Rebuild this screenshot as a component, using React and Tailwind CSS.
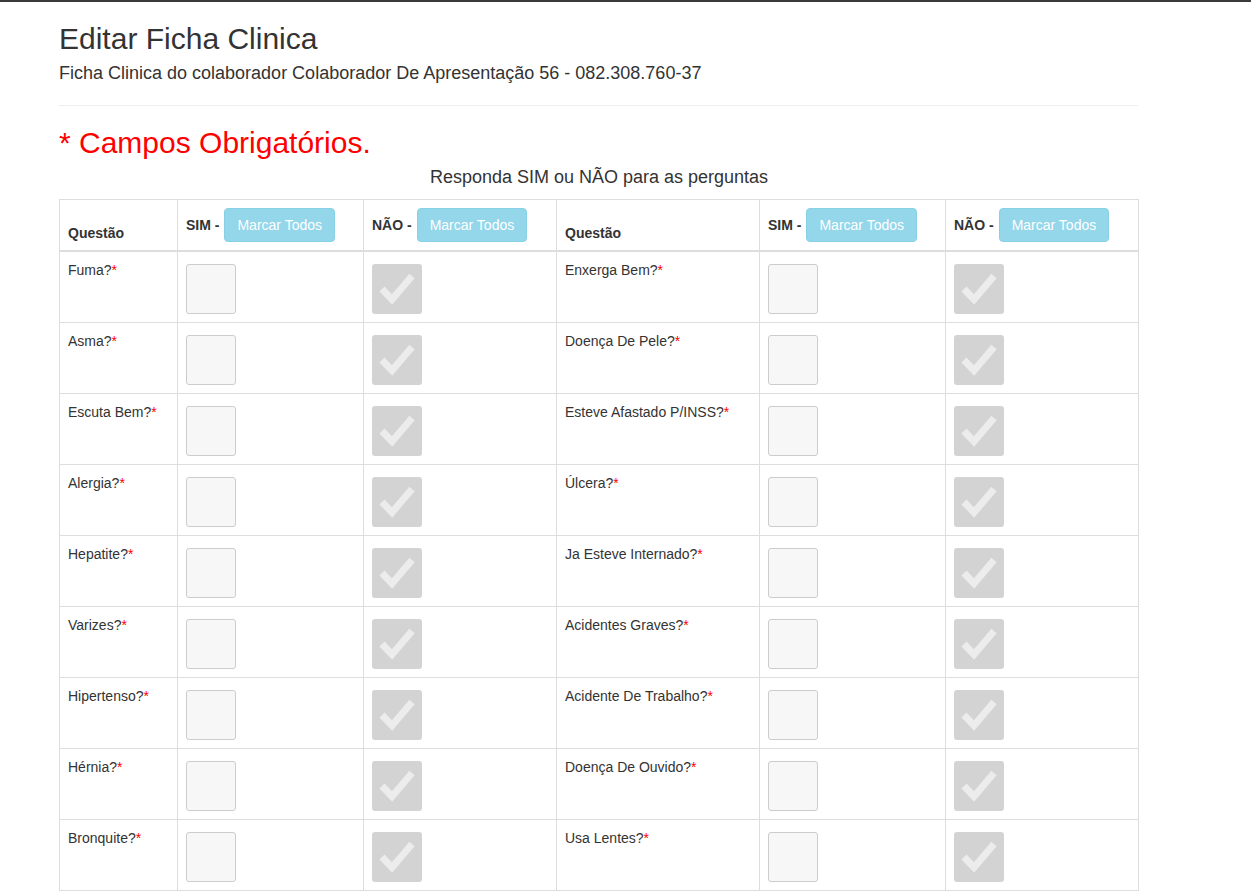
import React from "react";

const left = ["Fuma?", "Asma?", "Escuta Bem?", "Alergia?", "Hepatite?", "Varizes?", "Hipertenso?", "Hérnia?", "Bronquite?"];
const right = ["Enxerga Bem?", "Doença De Pele?", "Esteve Afastado P/INSS?", "Úlcera?", "Ja Esteve Internado?", "Acidentes Graves?", "Acidente De Trabalho?", "Doença De Ouvido?", "Usa Lentes?"];

const cols = "grid grid-cols-[117px_186px_193px_203px_186px_193px]";

const MarkAll = () => (
    <button className="ml-[5px] h-[34px] px-[12px] rounded-[4px] bg-[#94d6ea] border border-[#87d1e7] text-white text-[14px] leading-[20px] font-normal cursor-not-allowed">
        Marcar Todos
    </button>
);

const Empty = () => (
    <div className="mt-[4px] w-[50px] h-[50px] rounded-[3px] border border-[#cccccc] bg-[#f7f7f7]" />
);

const Checked = () => (
    <div className="mt-[4px] w-[50px] h-[50px] rounded-[3px] bg-[#d3d3d3]">
        <svg width="50" height="50" viewBox="0 0 50 50">
            <polyline points="10,25 20,35.5 40,12" fill="none" stroke="#ececec" strokeWidth="7" strokeLinejoin="miter" />
        </svg>
    </div>
);

const Question = ({ text }) => (
    <span>
        {text}
        <span className="text-[#ff0000]">*</span>
    </span>
);

export default function App() {
    return (
        <div className="min-h-screen bg-white text-[#333333] font-['Liberation_Sans',Arial,sans-serif]">
            <div className="h-[2px] bg-[#3a3a3a]" />

            <div className="ml-[59px] w-[1080px] pt-[20px]">
                {/* Cabeçalho */}
                <h1 className="text-[30px] leading-[33px]">Editar Ficha Clinica</h1>
                <p className="mt-[6px] text-[18px] leading-[25.7px]">
                    Ficha Clinica do colaborador Colaborador De Apresentação 56 - 082.308.760-37
                </p>
                <hr className="mt-[18px] w-[1079px] border-0 border-t border-[#eeeeee]" />

                <h2 className="mt-[20px] text-[30px] leading-[33px] text-[#ff0000]">* Campos Obrigatórios.</h2>
                <p className="mt-[6px] text-center text-[18px] leading-[25.7px]">Responda SIM ou NÃO para as perguntas</p>

                {/* Tabela */}
                <div className="mt-[9px] border border-[#dddddd] text-[14px] leading-[20px]">
                    <div className={`${cols} border-b-2 border-[#dddddd] font-bold h-[52px]`}>
                        <div className="flex items-end p-2 pb-[7px]">Questão</div>
                        <div className="flex items-center p-2 border-l border-[#dddddd]">SIM - <MarkAll /></div>
                        <div className="flex items-center p-2 border-l border-[#dddddd]">NÃO - <MarkAll /></div>
                        <div className="flex items-end p-2 pb-[7px] border-l border-[#dddddd]">Questão</div>
                        <div className="flex items-center p-2 border-l border-[#dddddd]">SIM - <MarkAll /></div>
                        <div className="flex items-center p-2 border-l border-[#dddddd]">NÃO - <MarkAll /></div>
                    </div>

                    {left.map((q, i) => (
                        <div key={q} className={`${cols} h-[71px] border-b border-[#dddddd] last:border-b-0 last:h-[70px]`}>
                            <div className="p-2"><Question text={q} /></div>
                            <div className="p-2 border-l border-[#dddddd]"><Empty /></div>
                            <div className="p-2 border-l border-[#dddddd]"><Checked /></div>
                            <div className="p-2 border-l border-[#dddddd]"><Question text={right[i]} /></div>
                            <div className="p-2 border-l border-[#dddddd]"><Empty /></div>
                            <div className="p-2 border-l border-[#dddddd]"><Checked /></div>
                        </div>
                    ))}
                </div>
            </div>
        </div>
    );
}
